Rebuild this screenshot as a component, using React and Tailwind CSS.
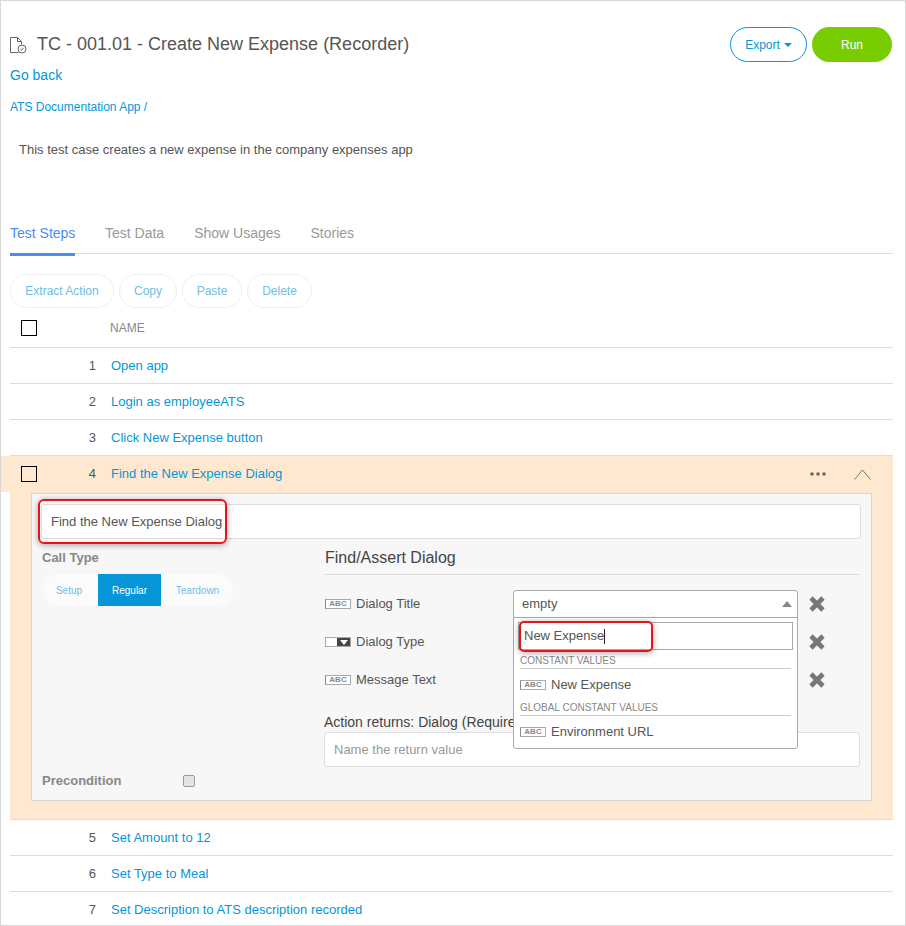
import React from 'react';

const steps = [
  { n: 1, name: 'Open app' },
  { n: 2, name: 'Login as employeeATS' },
  { n: 3, name: 'Click New Expense button' },
];

const laterSteps = [
  { n: 5, name: 'Set Amount to 12' },
  { n: 6, name: 'Set Type to Meal' },
  { n: 7, name: 'Set Description to ATS description recorded' },
];

function AbcBadge() {
  return (
    <span className="flex h-[10px] w-[26px] shrink-0 items-center justify-center border border-[#aaa] border-l-[#888] bg-white text-[8px] font-bold leading-none text-[#888]">
      ABC
    </span>
  );
}

function SelectBadge() {
  return (
    <span className="flex h-[10px] w-[26px] shrink-0 border border-[#aaa]">
      <span className="flex-1 bg-white" />
      <span className="flex w-[13px] items-center justify-center bg-[#444]">
        <svg width="8" height="5" viewBox="0 0 8 5"><path d="M0 0h8L4 5z" fill="#fff" /></svg>
      </span>
    </span>
  );
}

function RemoveIcon() {
  return (
    <svg width="16" height="16" viewBox="0 0 16 16" className="shrink-0">
      <path d="M2 2l12 12M14 2L2 14" stroke="#777" strokeWidth="4.6" />
    </svg>
  );
}

function StepRow({ n, name }) {
  return (
    <div className="flex h-[36px] items-center border-b border-[#ddd]">
      <span className="w-[86px] text-right text-[13px] text-[#555]">{n}</span>
      <a className="ml-[15px] text-[13px] text-[#0696d7]">{name}</a>
    </div>
  );
}

function ToolButton({ label, width }) {
  return (
    <button className={`flex h-[34px] items-center justify-center rounded-full border border-[#f0f0f0] text-[12px] text-[#6cc0e5] ${width}`}>
      {label}
    </button>
  );
}

function ParamRow({ icon, label, children }) {
  return (
    <div className="flex h-[38px] items-center">
      <div className="flex w-[189px] items-center gap-[5px] pl-px text-[13px] text-[#555]">
        {icon}
        <span>{label}</span>
      </div>
      <div className="relative w-[285px] self-stretch">{children}</div>
      <div className="ml-[11px]"><RemoveIcon /></div>
    </div>
  );
}

function ValueDropdown() {
  return (
    <div className="absolute left-0 top-[5px] z-10 h-[159px] w-[285px] rounded-[3px] border border-[#aaa] bg-white">
      <div className="flex h-[27px] items-center justify-between border-b border-[#aaa] pl-[8px] pr-[5px] text-[13px] text-[#555]">
        <span>empty</span>
        <svg width="10" height="6" viewBox="0 0 10 6"><path d="M5 0l5 6H0z" fill="#888" /></svg>
      </div>
      <div className="relative ml-[4px] mt-[4px] flex h-[28px] w-[275px] items-center border border-[#aaa] pl-[5px] text-[13px] text-[#555]">
        New Expense
        <span className="h-[15px] w-px bg-[#222]" />
        <div className="absolute left-[0px] top-[-2px] h-[31px] w-[134px] rounded-[5px] border-2 border-[#e8141c] shadow-[0_1px_6px_rgba(0,0,0,0.35)]" />
      </div>
      <div className="mx-[6px] mt-[3px] flex h-[16px] items-center border-b border-[#ccc] text-[10px] uppercase text-[#888]">
        Constant values
      </div>
      <div className="ml-[6px] flex h-[31px] items-center gap-[5px] text-[13px] text-[#555]">
        <AbcBadge />
        New Expense
      </div>
      <div className="mx-[6px] flex h-[16px] items-center border-b border-[#ccc] text-[10px] uppercase text-[#888]">
        Global constant values
      </div>
      <div className="ml-[6px] flex h-[31px] items-center gap-[5px] text-[13px] text-[#555]">
        <AbcBadge />
        Environment URL
      </div>
    </div>
  );
}

export default function App() {
  return (
    <div className="h-[926px] w-[906px] overflow-hidden border border-[#d8d8d8] pl-[9px] pr-[12px] font-['Liberation_Sans',Arial,sans-serif] text-[#555]">
      <div className="mt-[26px] flex h-[35px] items-center justify-between pr-px">
        <div className="flex items-center">
          <svg width="18" height="18" viewBox="0 0 18 18" fill="none" className="-ml-px mr-[10px]">
            <path d="M9.5 16.5H1.5V1.5h7l4 4v3" stroke="#666" strokeWidth="1" />
            <path d="M8.5 1.5v4h4" stroke="#666" strokeWidth="1" />
            <circle cx="13" cy="13" r="4" stroke="#666" strokeWidth="1" fill="#fff" />
            <path d="M11.2 13l1.3 1.3 2.3-2.6" stroke="#666" strokeWidth="1" />
          </svg>
          <h1 className="text-[18px] font-normal text-[#555]">TC - 001.01 - Create New Expense (Recorder)</h1>
        </div>
        <div className="flex gap-[5px]">
          <button className="flex h-[35px] w-[77px] items-center justify-center gap-[4px] rounded-full border border-[#0696d7] text-[12px] text-[#0696d7]">
            Export
            <svg width="8" height="4" viewBox="0 0 8 4"><path d="M0 0h8L4 4z" fill="#0696d7" /></svg>
          </button>
          <button className="h-[35px] w-[80px] rounded-full bg-[#78cd00] text-[12px] text-white">Run</button>
        </div>
      </div>

      <a className="mt-[3px] block text-[14px] leading-[20px] text-[#0696d7]">Go back</a>
      <div className="mt-[13px] text-[12px] leading-[18px] text-[#0696d7]">ATS Documentation App /</div>
      <p className="mt-[25px] pl-[9px] text-[13px] leading-[18px] text-[#555]">This test case creates a new expense in the company expenses app</p>

      <div className="mt-[54px] flex h-[41px] gap-[30px] border-b border-[#ddd] text-[14px] text-[#999]">
        <div className="h-[43px] w-[65px] whitespace-nowrap border-b-[3px] border-[#4a8cf7] pt-[10px] text-[#4a8cf7]">Test Steps</div>
        <div className="pt-[10px]">Test Data</div>
        <div className="pt-[10px]">Show Usages</div>
        <div className="pt-[10px]">Stories</div>
      </div>

      <div className="mt-[20px] flex gap-[5px]">
        <ToolButton label="Extract Action" width="w-[104px]" />
        <ToolButton label="Copy" width="w-[58px]" />
        <ToolButton label="Paste" width="w-[60px]" />
        <ToolButton label="Delete" width="w-[65px]" />
      </div>

      <div className="flex h-[40px] items-center border-b border-[#ddd]">
        <span className="ml-[11px] h-[16px] w-[16px] border border-black" />
        <span className="ml-[73px] text-[12px] text-[#888]">NAME</span>
      </div>

      {steps.map((s) => <StepRow key={s.n} {...s} />)}

      <div className="-ml-[9px] flex h-[36px] items-center bg-[#fee9d0] pl-[20px] pr-[22px]">
        <span className="h-[16px] w-[16px] border border-black" />
        <span className="w-[59px] text-right text-[13px] text-[#555]">4</span>
        <a className="ml-[15px] text-[13px] text-[#0696d7]">Find the New Expense Dialog</a>
        <div className="ml-auto flex items-center gap-[28px]">
          <svg width="16" height="4" viewBox="0 0 16 4" fill="#666">
            <circle cx="2" cy="2" r="1.8" /><circle cx="8" cy="2" r="1.8" /><circle cx="14" cy="2" r="1.8" />
          </svg>
          <svg width="17" height="11" viewBox="0 0 17 11" fill="none">
            <path d="M0.5 10.5L8.5 1l8 9.5" stroke="#777" strokeWidth="1" />
          </svg>
        </div>
      </div>

      <div className="border-b border-[#ddd] bg-[#fee9d0] px-[21px] pb-[18px] pt-[1px]">
        <div className="h-[308px] border border-[#d5d5d5] bg-[#f7f7f7] pl-[9px] pr-[10px] pt-[10px]">
          <div className="relative">
            <input
              readOnly
              value="Find the New Expense Dialog"
              className="block h-[35px] w-full rounded-[3px] border border-[#ddd] bg-white pl-[9px] text-[13px] text-[#555] outline-none"
            />
            <div className="absolute left-[-3px] top-[-5px] h-[45px] w-[189px] rounded-[6px] border-2 border-[#e8141c] shadow-[0_1px_6px_rgba(0,0,0,0.35)]" />
          </div>

          <div className="mt-[9px] flex">
            <div className="flex h-[243px] w-[283px] flex-col pl-px">
              <div className="text-[13px] font-bold leading-[20px] text-[#888]">Call Type</div>
              <div className="ml-px mt-[6px] flex h-[32px] w-[190px] items-center overflow-hidden rounded-full bg-[#fbfbfb] text-[10px] text-[#6cc0e5]">
                <span className="w-[55px] pr-[3px] text-center">Setup</span>
                <span className="flex h-full w-[63px] items-center justify-center bg-[#0696d7] text-white">Regular</span>
                <span className="flex-1 pl-[1px] text-center">Teardown</span>
              </div>
              <div className="mt-auto flex items-center">
                <span className="w-[141px] text-[13px] font-bold leading-[20px] text-[#888]">Precondition</span>
                <span className="h-[12px] w-[12px] rounded-[2px] border border-[#999] bg-[#e4e4e4]" />
              </div>
            </div>

            <div className="w-[536px]">
              <div className="flex h-[27px] items-start border-b border-[#ddd] pl-px text-[16px] leading-[20px] text-[#444]">Find/Assert Dialog</div>
              <div className="pt-[10px]">
                <ParamRow icon={<AbcBadge />} label="Dialog Title"><ValueDropdown /></ParamRow>
                <ParamRow icon={<SelectBadge />} label="Dialog Type" />
                <ParamRow icon={<AbcBadge />} label="Message Text" />
              </div>
              <div className="mt-[14px] h-[19px] text-[14px] leading-[19px] text-[#444]">Action returns: Dialog (Required)</div>
              <input
                readOnly
                placeholder="Name the return value"
                className="block h-[35px] w-full rounded-[3px] border border-[#ddd] bg-white pl-[9px] text-[13px] text-[#555] outline-none placeholder:text-[#999]"
              />
            </div>
          </div>
        </div>
      </div>

      {laterSteps.map((s) => <StepRow key={s.n} {...s} />)}
    </div>
  );
}
